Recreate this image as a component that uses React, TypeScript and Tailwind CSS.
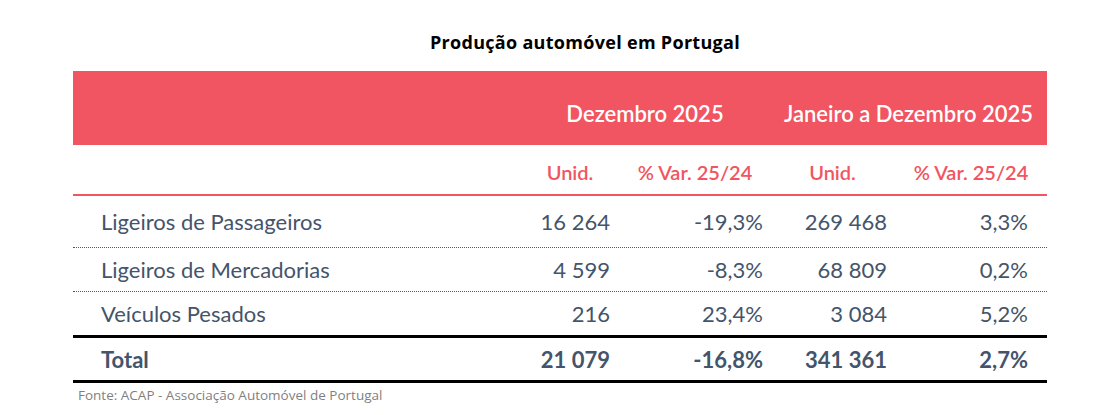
export default function App() {
  const rows = [
    { label: "Ligeiros de Passageiros", v: ["16 264", "-19,3%", "269 468", "3,3%"], h: "h-[52px]", border: "border-b border-dotted border-[#555]" },
    { label: "Ligeiros de Mercadorias", v: ["4 599", "-8,3%", "68 809", "0,2%"], h: "h-[44px]", border: "border-b border-dotted border-[#555]" },
    { label: "Veículos Pesados", v: ["216", "23,4%", "3 084", "5,2%"], h: "h-[43px]", border: "" },
  ];
  const pads = ["pr-[10px]", "pr-[7px]", "pr-[8px]", "pr-[19px]"];
  const grid = "grid grid-cols-[447px_100px_150px_125px_152px]";

  return (
    <div className="w-[1098px] h-[415px] bg-white font-['Lato',sans-serif]">
      <div className="pt-[29px] h-[71px] text-center pl-[72px]">
        <h1 className="font-['Open_Sans',sans-serif] font-bold text-[18px] tracking-[0.3px] text-black">
          Produção automóvel em Portugal
        </h1>
      </div>
      <div className="ml-[73px] w-[974px]">
        <div className={`${grid} h-[74px] bg-[#f05561] items-center text-white text-[22px] font-semibold pt-[10px]`}>
          <div />
          <div className="col-span-2 text-center">Dezembro 2025</div>
          <div className="col-span-2 text-center">Janeiro a Dezembro 2025</div>
        </div>
        <div className={`${grid} h-[51px] items-center text-[#f05561] text-[20px] font-semibold border-b-2 border-[#f05561] pt-[4px]`}>
          <div />
          <div className="text-center">Unid.</div>
          <div className="text-center">% Var. 25/24</div>
          <div className="text-center">Unid.</div>
          <div className="text-center">% Var. 25/24</div>
        </div>
        {rows.map((r) => (
          <div key={r.label} className={`${grid} ${r.h} ${r.border} items-center text-[22px] text-[#44546a]`}>
            <div className="pl-[28px]">{r.label}</div>
            {r.v.map((x, i) => (
              <div key={i} className={`text-right ${pads[i]}`}>{x}</div>
            ))}
          </div>
        ))}
        <div className={`${grid} h-[48px] items-center text-[22px] font-bold text-[#44546a] border-y-[3px] border-black`}>
          <div className="pl-[28px]">Total</div>
          {["21 079", "-16,8%", "341 361", "2,7%"].map((x, i) => (
            <div key={i} className={`text-right ${pads[i]}`}>{x}</div>
          ))}
        </div>
        <div className="pl-[5px] pt-[2px] text-[13.5px] text-[#7f7f7f] font-['Open_Sans',sans-serif]">
          Fonte: ACAP - Associação Automóvel de Portugal
        </div>
      </div>
    </div>
  );
}
